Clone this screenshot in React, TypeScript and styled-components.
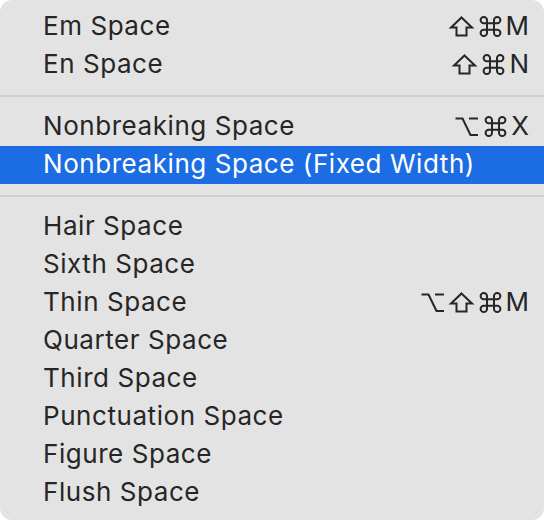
import React from "react";
import styled, { createGlobalStyle } from "styled-components";

const Global = createGlobalStyle`
  html, body { margin: 0; padding: 0; background: #ffffff; }
  body { font-family: Inter, "Noto Sans", sans-serif; }
`;

const Menu = styled.div`
  width: 544px;
  height: 520px;
  box-sizing: border-box;
  background: #e3e3e3;
  border-radius: 12px;
  padding: 8px 0;
  display: flex;
  flex-direction: column;
  overflow: hidden;
`;

const Row = styled.div<{ $active?: boolean }>`
  height: 38px;
  box-sizing: border-box;
  display: flex;
  align-items: center;
  justify-content: space-between;
  padding: 0 15px 3px 43px;
  background: ${(p) => (p.$active ? "#1c6de4" : "transparent")};
  color: ${(p) => (p.$active ? "#ffffff" : "#262626")};
  font-size: 26px;
  letter-spacing: 0.56px;
`;

const Label = styled.span`
  white-space: nowrap;
`;

const Shortcut = styled.span`
  display: flex;
  align-items: center;
  gap: 6px;
`;

const ModIcon = styled.svg`
  width: 23px;
  height: 21px;
  fill: none;
  stroke: currentColor;
  stroke-width: 2;
  stroke-linejoin: miter;
  stroke-linecap: butt;
  overflow: visible;
  margin-top: 2px;
`;

const Key = styled.span`
  font-size: 26px;
  letter-spacing: 0;
  margin-left: -2px;
`;

const Separator = styled.div`
  height: 2px;
  margin: 11px 0;
  background: #cfcfcf;
`;

const Shift = () => (
  <ModIcon viewBox="0 0 23 21">
    <path d="M11.5 1.5 L22 11.5 H16.5 V19.5 H6.5 V11.5 H1 Z" />
  </ModIcon>
);

const Cmd = () => (
  <ModIcon viewBox="0 0 23 21">
    <path d="M15 4.1V16.9a3.2 3.2 0 1 0 3.2-3.2H4.8a3.2 3.2 0 1 0 3.2 3.2V4.1a3.2 3.2 0 1 0-3.2 3.2h13.4a3.2 3.2 0 1 0-3.2-3.2" />
  </ModIcon>
);

const Opt = () => (
  <ModIcon viewBox="0 0 23 21">
    <path d="M0.5 2.5 H7.5 L15.5 19 H23 M14 2.5 H23" />
  </ModIcon>
);

type Mod = "shift" | "cmd" | "opt";
type Item =
  | { label: string; mods?: Mod[]; key?: string; active?: boolean }
  | "sep";

const items: Item[] = [
  { label: "Em Space", mods: ["shift", "cmd"], key: "M" },
  { label: "En Space", mods: ["shift", "cmd"], key: "N" },
  "sep",
  { label: "Nonbreaking Space", mods: ["opt", "cmd"], key: "X" },
  { label: "Nonbreaking Space (Fixed Width)", active: true },
  "sep",
  { label: "Hair Space" },
  { label: "Sixth Space" },
  { label: "Thin Space", mods: ["opt", "shift", "cmd"], key: "M" },
  { label: "Quarter Space" },
  { label: "Third Space" },
  { label: "Punctuation Space" },
  { label: "Figure Space" },
  { label: "Flush Space" },
];

const renderMod = (m: Mod, i: number) =>
  m === "shift" ? <Shift key={i} /> : m === "cmd" ? <Cmd key={i} /> : <Opt key={i} />;

export default function App() {
  return (
    <>
      <Global />
      <Menu>
        {items.map((it, i) =>
          it === "sep" ? (
            <Separator key={i} />
          ) : (
            <Row key={i} $active={it.active}>
              <Label>{it.label}</Label>
              {it.key && (
                <Shortcut>
                  {it.mods?.map(renderMod)}
                  <Key>{it.key}</Key>
                </Shortcut>
              )}
            </Row>
          )
        )}
      </Menu>
    </>
  );
}
